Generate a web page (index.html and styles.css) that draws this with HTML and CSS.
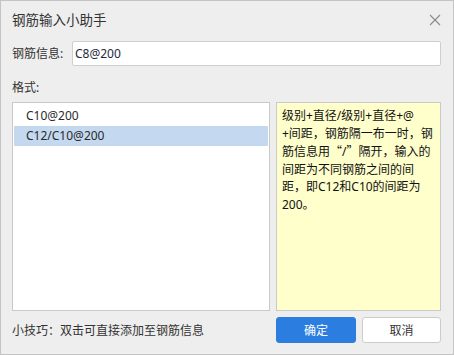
FILE: index.html
```html
<!DOCTYPE html>
<html lang="zh-CN">
<head>
<meta charset="utf-8">
<title>钢筋输入小助手</title>
<link rel="stylesheet" href="styles.css">
</head>
<body>
<div class="dialog">
  <div class="titlebar">
    <span class="title">钢筋输入小助手</span>
    <svg class="close" width="12" height="12" viewBox="0 0 12 12" aria-hidden="true">
      <path d="M1 1 L11 11 M11 1 L1 11" stroke="#8a8a8a" stroke-width="1.1" fill="none"/>
    </svg>
  </div>
  <div class="info-row">
    <span class="label">钢筋信息:</span>
    <div class="input">C8@200</div>
  </div>
  <div class="format-label">格式:</div>
  <div class="grid boxes">
    <div class="list">
      <div class="item">C10@200</div>
      <div class="item selected">C12/C10@200</div>
    </div>
    <div class="note">
      <span class="line">级别+直径/级别+直径+@</span>
      <span class="line">+间距，钢筋隔一布一时，钢</span>
      <span class="line">筋信息用<span class="q">“</span>/<span class="q">”</span>隔开，输入的</span>
      <span class="line">间距为不同钢筋之间的间</span>
      <span class="line">距，即C12和C10的间距为</span>
      <span class="line">200。</span>
    </div>
  </div>
  <div class="grid footer">
    <span class="hint">小技巧：双击可直接添加至钢筋信息</span>
    <div class="buttons">
      <button class="btn primary">确定</button>
      <button class="btn">取消</button>
    </div>
  </div>
</div>
</body>
</html>
```

FILE: styles.css
```css
html, body {
  margin: 0;
  padding: 0;
  background: #eeeeee;
}

.dialog {
  width: 454px;
  height: 355px;
  box-sizing: border-box;
  border: 1px solid #c4c4c4;
  background: #eeeeee;
  padding: 0 12px 0 11px;
  font-family: "Noto Sans", "Noto Sans CJK SC", sans-serif;
  font-size: 12px;
  color: #333333;
  display: flex;
  flex-direction: column;
}

.titlebar {
  height: 40px;
  box-sizing: border-box;
  padding-bottom: 2px;
  display: flex;
  align-items: center;
  justify-content: space-between;
}

.title {
  font-size: 13.5px;
  color: #333333;
  line-height: 20px;
}

.close {
  display: block;
}

.info-row {
  display: flex;
  align-items: center;
  height: 25px;
}

.label {
  width: 60px;
  line-height: 20px;
}

.input {
  flex: 1;
  height: 25px;
  box-sizing: border-box;
  background: #ffffff;
  border: 1px solid #cfcfcf;
  border-radius: 2px;
  padding: 0 2px;
  line-height: 23px;
  color: #1e2a3a;
}

.format-label {
  margin-top: 12px;
  line-height: 20px;
  height: 20px;
}

.grid {
  display: grid;
  grid-template-columns: 258px 165px;
  column-gap: 6px;
}

.boxes {
  margin-top: 4px;
  height: 209px;
}

.list {
  background: #ffffff;
  border: 1px solid #c9c9c9;
  padding: 3px 1px;
}

.item {
  height: 20px;
  line-height: 20px;
  padding-left: 12px;
  color: #2a2a2a;
}

.item.selected {
  background: #c4d9ef;
}

.note {
  background: #ffffcc;
  border: 1px solid #cacaca;
  padding: 4px 5px;
  color: #111111;
  line-height: 17.5px;
  display: flex;
  flex-direction: column;
}

.line {
  white-space: nowrap;
}

.q {
  font-family: "Noto Sans CJK SC", sans-serif;
  font-feature-settings: "fwid" 1;
}

.footer {
  margin-top: 6px;
  align-items: center;
}

.hint {
  line-height: 20px;
  padding-top: 2px;
}

.buttons {
  display: flex;
  gap: 6px;
}

.btn {
  height: 26px;
  box-sizing: border-box;
  border: 1px solid #cccccc;
  border-radius: 3px;
  background: #ffffff;
  color: #333333;
  font-family: "Noto Sans", "Noto Sans CJK SC", sans-serif;
  font-size: 12px;
  padding: 0;
  width: 79px;
}

.btn.primary {
  width: 80px;
  background: #2b7de0;
  border-color: #2b7de0;
  color: #ffffff;
}
```
